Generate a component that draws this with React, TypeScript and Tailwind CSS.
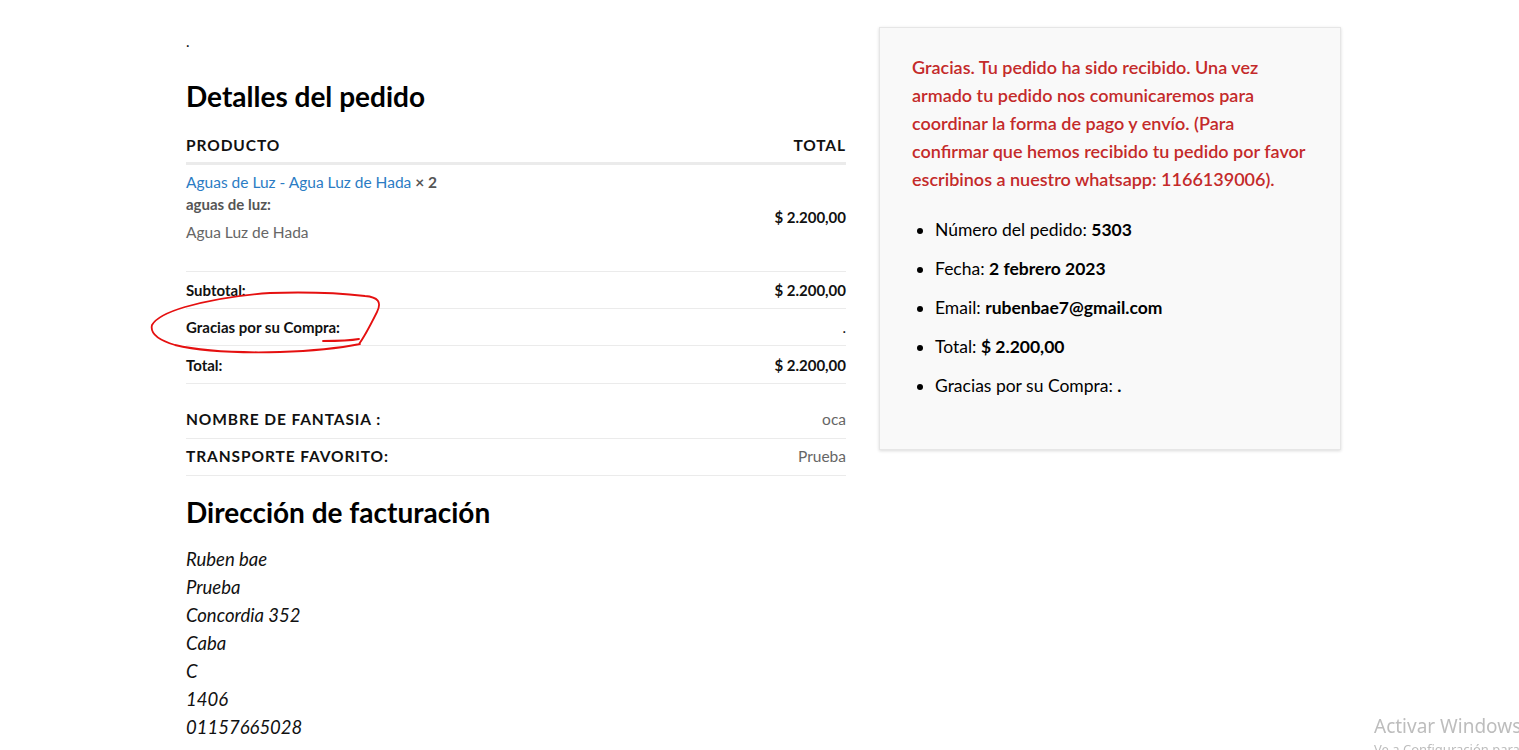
import React from "react";

export default function App() {
  const font = { fontFamily: "Lato, 'Noto Sans', sans-serif" };
  return (
    <div className="relative min-h-[750px] bg-white text-[#111]" style={font}>
      <div className="flex items-start pl-[186px] pt-[27px]">
        {/* left column */}
        <div className="w-[660px] shrink-0">
          <div className="h-[30px] pt-[3px] text-[15px] leading-[22px]">.</div>
          <h2 className="mt-[19px] text-[28px] font-bold leading-[40px] text-black">Detalles del pedido</h2>
          <div className="mt-[18px] flex h-[31px] items-center justify-between border-b-[3px] border-[#ebebeb] pb-[5px] text-[15.5px] font-bold uppercase tracking-[0.9px]">
            <span>Producto</span>
            <span>Total</span>
          </div>
          <div className="flex h-[107px] justify-between border-b border-[#ebebeb] pt-[6px]">
            <div className="text-[15.5px]">
              <div className="leading-[22px]">
                <span className="text-[#2b7cc4]">Aguas de Luz - Agua Luz de Hada</span>{" "}
                <strong className="font-bold text-[#555]">× 2</strong>
              </div>
              <div className="text-[15px] font-bold leading-[22px] text-[#555]">aguas de luz:</div>
              <div className="mt-[6px] leading-[22px] text-[#666]">Agua Luz de Hada</div>
            </div>
            <div className="pt-[35px] text-[15px] font-bold leading-[22px]">$ 2.200,00</div>
          </div>
          <div className="flex h-[37px] items-center justify-between border-b border-[#ebebeb] pt-[1px] text-[15px] font-bold">
            <span>Subtotal:</span>
            <span>$ 2.200,00</span>
          </div>
          <div className="flex h-[37px] items-center justify-between border-b border-[#ebebeb] pt-[1px] text-[15px] font-bold">
            <span>Gracias por su Compra:</span>
            <span className="font-normal">.</span>
          </div>
          <div className="flex h-[38px] items-center justify-between border-b border-[#ebebeb] pt-[1px] text-[15px] font-bold">
            <span>Total:</span>
            <span>$ 2.200,00</span>
          </div>
          <div className="mt-[17px] flex h-[38px] items-center justify-between border-b border-[#ebebeb] text-[15.5px]">
            <span className="font-bold uppercase tracking-[0.9px]">Nombre de fantasia :</span>
            <span className="text-[#666]">oca</span>
          </div>
          <div className="flex h-[37px] items-center justify-between border-b border-[#ebebeb] text-[15.5px]">
            <span className="font-bold uppercase tracking-[0.9px]">Transporte favorito:</span>
            <span className="text-[#666]">Prueba</span>
          </div>
          <h2 className="mt-[16px] text-[28px] font-bold leading-[40px] text-black">Dirección de facturación</h2>
          <address className="mt-[13px] text-[18.5px] italic leading-[28px] text-[#111]">
            <div>Ruben bae</div>
            <div>Prueba</div>
            <div>Concordia 352</div>
            <div>Caba</div>
            <div>C</div>
            <div>1406</div>
            <div>01157665028</div>
          </address>
        </div>

        {/* right box */}
        <div className="ml-[33px] h-[423px] w-[462px] shrink-0 border border-[#e6e6e6] bg-[#f9f9f9] px-[32px] pt-[25px] shadow-[0_1px_3px_rgba(0,0,0,0.15)]">
          <p className="text-[18px] font-semibold leading-[28px] text-[#c42a2a]">
            Gracias. Tu pedido ha sido recibido. Una vez armado tu pedido nos comunicaremos para coordinar la forma de pago y envío. (Para confirmar que hemos recibido tu pedido por favor escribinos a nuestro whatsapp: 1166139006).
          </p>
          <ul className="mt-[23px] list-disc pl-[23px] text-[17.5px] leading-[28px] text-black">
            <li className="mb-[11px]">Número del pedido: <strong className="font-bold">5303</strong></li>
            <li className="mb-[11px]">Fecha: <strong className="font-bold">2 febrero 2023</strong></li>
            <li className="mb-[11px]">Email: <strong className="font-bold">rubenbae7@gmail.com</strong></li>
            <li className="mb-[11px]">Total: <strong className="font-bold">$ 2.200,00</strong></li>
            <li className="mb-[11px]">Gracias por su Compra: <strong className="font-bold">.</strong></li>
          </ul>
        </div>
      </div>

      {/* red hand-drawn annotation */}
      <svg className="pointer-events-none absolute left-0 top-0" width="420" height="380" viewBox="0 0 420 380" fill="none">
        <path
          d="M 359 344 C 365 336, 372 322, 377 312 C 382 302, 378 297, 365 296 C 330 292, 300 292, 270 293 C 240 295, 210 300, 185 307 C 168 312, 156 318, 152 325 C 150 333, 158 340, 175 345 C 200 351, 240 353, 280 352 C 310 351, 340 348, 360 344"
          stroke="#e51010"
          strokeWidth="1.8"
          strokeLinecap="round"
        />
        <path d="M 323 341 C 335 341, 348 341, 359 339" stroke="#e51010" strokeWidth="1.8" strokeLinecap="round" />
      </svg>

      {/* windows watermark */}
      <div className="pointer-events-none fixed left-[1374px] top-[713px] w-[145px] overflow-hidden whitespace-nowrap text-[#bdbdbd]" style={{ fontFamily: "'Noto Sans', 'Open Sans', sans-serif" }}>
        <div className="text-[19px] leading-[27px]">Activar Windows</div>
        <div className="text-[13px] leading-[18px]">Ve a Configuración para activar Windows.</div>
      </div>
    </div>
  );
}
